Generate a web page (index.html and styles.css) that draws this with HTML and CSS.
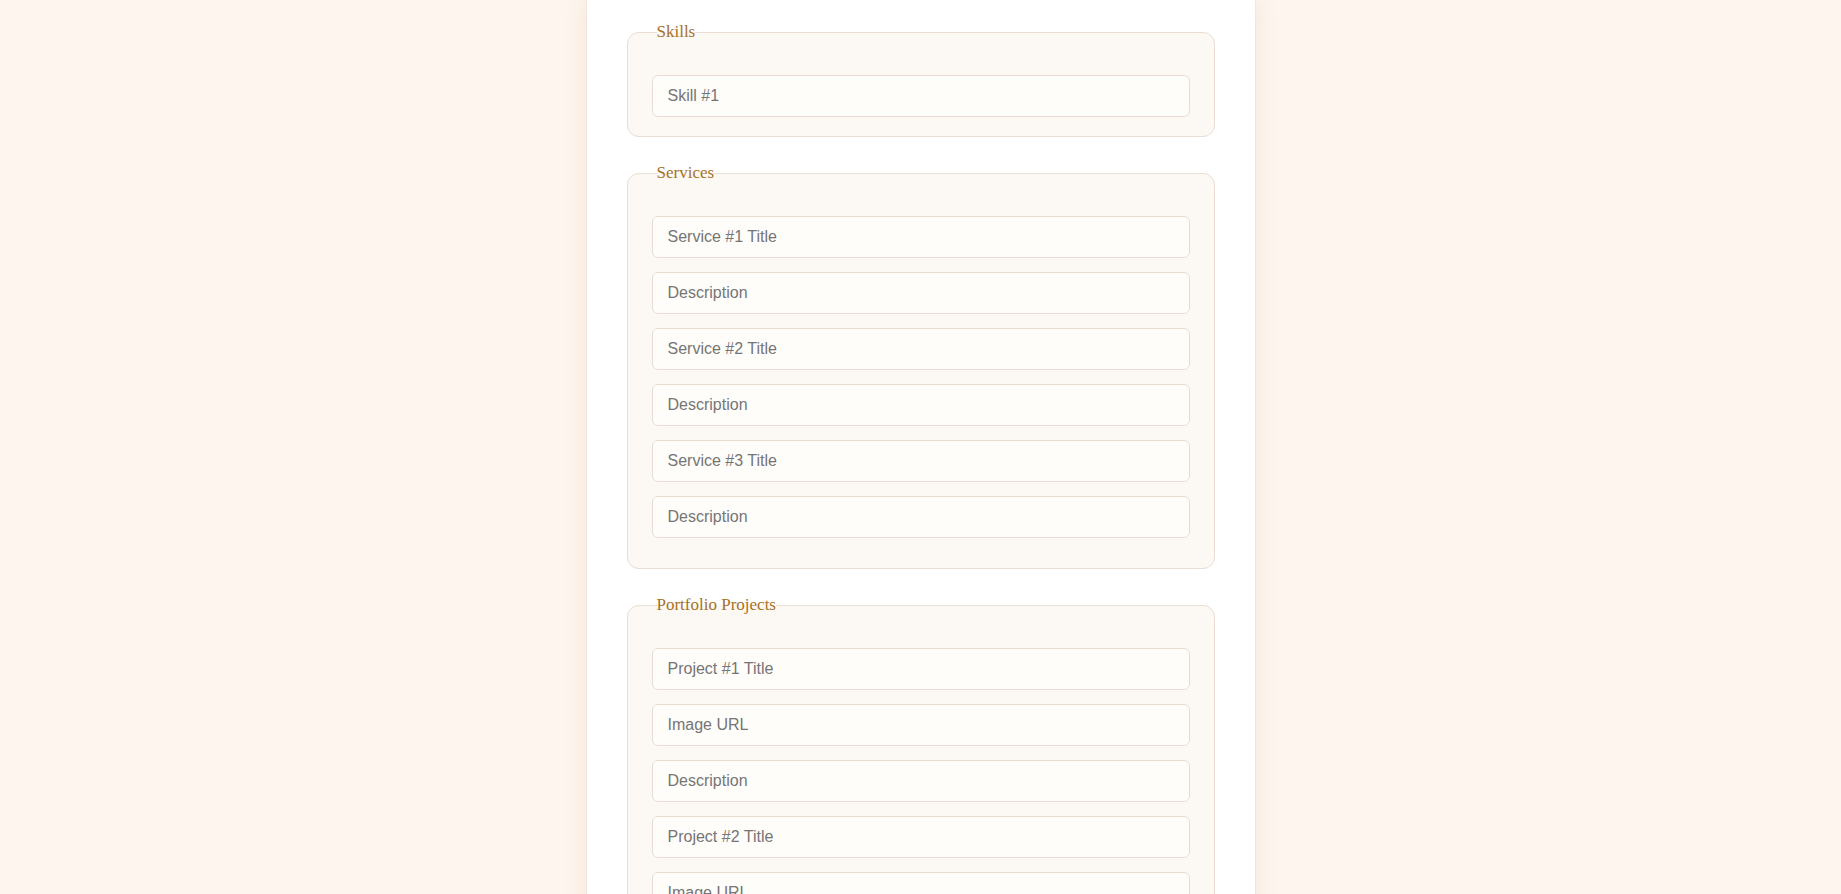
FILE: index.html
```html
<!DOCTYPE html>
<html lang="en">
<head>
<meta charset="utf-8">
<title>Portfolio Builder</title>
<link rel="stylesheet" href="styles.css">
</head>
<body>
<main class="card">
  <fieldset class="group group-tight">
    <legend class="group-title">Skills</legend>
    <div class="fields">
      <input class="field" type="text" placeholder="Skill #1">
    </div>
  </fieldset>

  <fieldset class="group">
    <legend class="group-title">Services</legend>
    <div class="fields">
      <input class="field" type="text" placeholder="Service #1 Title">
      <input class="field" type="text" placeholder="Description">
      <input class="field" type="text" placeholder="Service #2 Title">
      <input class="field" type="text" placeholder="Description">
      <input class="field" type="text" placeholder="Service #3 Title">
      <input class="field" type="text" placeholder="Description">
    </div>
  </fieldset>

  <fieldset class="group">
    <legend class="group-title">Portfolio Projects</legend>
    <div class="fields">
      <input class="field" type="text" placeholder="Project #1 Title">
      <input class="field" type="text" placeholder="Image URL">
      <input class="field" type="text" placeholder="Description">
      <input class="field" type="text" placeholder="Project #2 Title">
      <input class="field" type="text" placeholder="Image URL">
      <input class="field" type="text" placeholder="Description">
      <input class="field" type="text" placeholder="Project #3 Title">
      <input class="field" type="text" placeholder="Image URL">
      <input class="field" type="text" placeholder="Description">
    </div>
  </fieldset>
</main>
</body>
</html>
```

FILE: styles.css
```css
html, body {
  margin: 0;
  padding: 0;
}

body {
  background: #fdf5ee;
  font-family: "Liberation Sans", Arial, sans-serif;
  height: 894px;
  overflow: hidden;
}

.card {
  width: 588px;
  margin: 0 auto;
  padding: 21px 40px 40px;
  background: #ffffff;
  box-shadow: 0 0 1px rgba(200, 160, 120, 0.5), 0 0 22px rgba(170, 120, 70, 0.13);
  min-height: 894px;
}

.group {
  margin: 0 0 25px;
  padding: 32px 24px 30px;
  border: 1px solid #e9ddd4;
  border-radius: 12px;
  background: #fcf9f5;
  min-width: 0;
}

.group-tight {
  padding-bottom: 19px;
}

.group-title {
  margin-left: 5px;
  padding: 0;
  font-family: "Liberation Serif", "Times New Roman", serif;
  font-size: 17px;
  line-height: 22px;
  color: #a6711f;
}

.fields {
  display: flex;
  flex-direction: column;
  gap: 14px;
}

.field {
  display: block;
  box-sizing: border-box;
  width: 100%;
  height: 42px;
  margin: 0;
  padding: 0 15px;
  border: 1px solid #e8dcd3;
  border-radius: 6px;
  background: #fffdfa;
  font-family: "Liberation Sans", Arial, sans-serif;
  font-size: 16px;
  color: #333333;
  outline: none;
}

.field::placeholder {
  color: #757575;
}
```
